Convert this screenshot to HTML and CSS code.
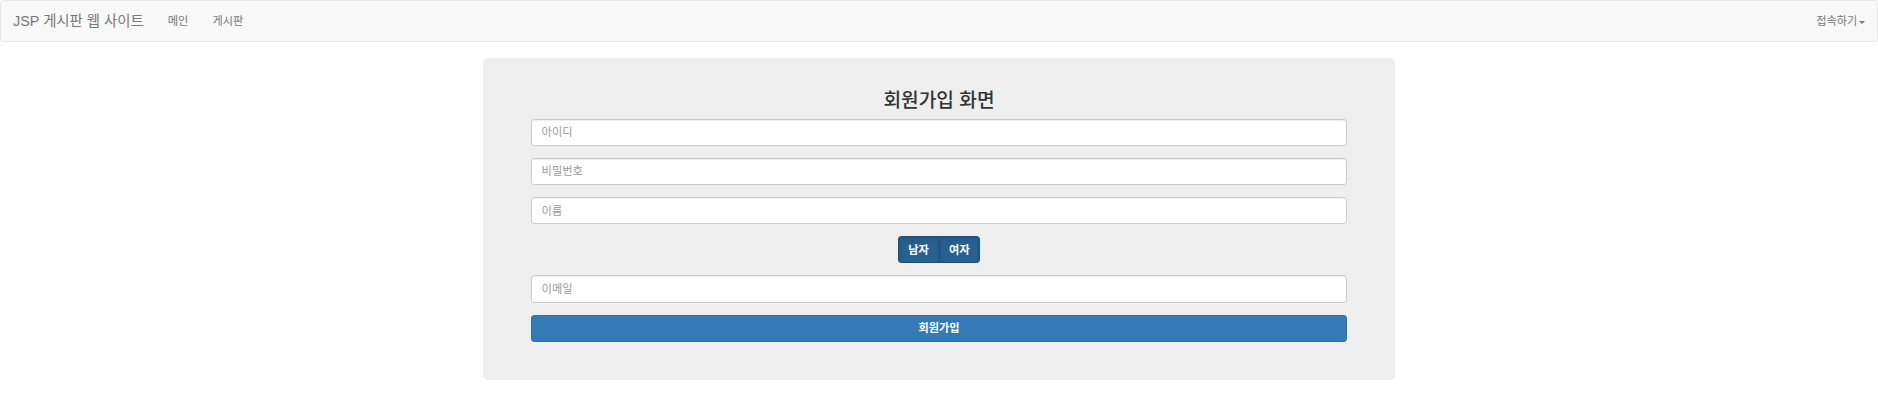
FILE: index.html
```html
<!DOCTYPE html>
<html lang="ko">
<head>
<meta charset="utf-8">
<title>JSP 게시판 웹 사이트</title>
<link rel="stylesheet" href="styles.css">
</head>
<body>
<nav class="navbar">
  <div class="nav-left">
    <a class="brand" href="#">JSP 게시판 웹 사이트</a>
    <ul class="nav">
      <li><a href="#">메인</a></li>
      <li><a href="#">게시판</a></li>
    </ul>
  </div>
  <ul class="nav">
    <li><a href="#">접속하기<span class="caret"></span></a></li>
  </ul>
</nav>
<div class="container">
  <div class="jumbotron">
    <form class="form">
      <h3 class="title">회원가입 화면</h3>
      <div class="form-group"><input class="form-control" type="text" placeholder="아이디"></div>
      <div class="form-group"><input class="form-control" type="password" placeholder="비밀번호"></div>
      <div class="form-group"><input class="form-control" type="text" placeholder="이름"></div>
      <div class="form-group center">
        <div class="btn-group">
          <label class="btn btn-active first">남자</label>
          <label class="btn btn-active last">여자</label>
        </div>
      </div>
      <div class="form-group"><input class="form-control" type="email" placeholder="이메일"></div>
      <button type="button" class="submit">회원가입</button>
    </form>
  </div>
</div>
</body>
</html>
```
FILE: styles.css
```css
* { box-sizing: border-box; }
html, body { margin: 0; padding: 0; }
body {
  font-family: "Liberation Sans", "Noto Sans CJK KR", sans-serif;
  font-size: 11.2px;
  line-height: 16px;
  color: #333;
  background: #fff;
}
a { text-decoration: none; }
.navbar {
  display: flex;
  justify-content: space-between;
  height: 41.6px;
  background: #f8f8f8;
  border: 1px solid #e7e7e7;
  border-radius: 3.2px;
  margin-bottom: 16px;
}
.nav-left { display: flex; }
.brand {
  display: block;
  padding: 12px 12px;
  font-size: 14.4px;
  line-height: 16px;
  color: #777;
  height: 39.6px;
}
.nav { display: flex; list-style: none; margin: 0; padding: 0; }
.nav a {
  display: block;
  padding: 12px 12px;
  line-height: 16px;
  color: #777;
}
.caret {
  display: inline-block;
  width: 0; height: 0;
  margin-left: 1.6px;
  vertical-align: middle;
  border-top: 3.2px solid #777;
  border-left: 3.2px solid transparent;
  border-right: 3.2px solid transparent;
}
.container { width: 912px; margin: 0 auto; }
.jumbotron {
  background: #eee;
  border-radius: 4.8px;
  padding: 16px 48px 38.4px;
}
.form { margin: 0; }
.title {
  margin: 16px 0 8px;
  font-size: 19.2px;
  line-height: 21.1px;
  font-weight: 500;
  text-align: center;
  color: #333;
}
.form-group { margin-bottom: 12px; }
.center { text-align: center; }
.form-control {
  display: block;
  width: 100%;
  height: 27.2px;
  padding: 4.8px 9.6px;
  font-family: inherit;
  font-size: 11.2px;
  line-height: 16px;
  color: #555;
  background: #fff;
  border: 1px solid #ccc;
  border-radius: 3.2px;
  box-shadow: inset 0 1px 1px rgba(0,0,0,.075);
  outline: none;
}
.form-control::placeholder { color: #999; }
.btn-group { display: inline-flex; vertical-align: middle; }
.btn {
  display: inline-block;
  height: 27.2px;
  padding: 4.8px 9.6px;
  font-size: 11.2px;
  line-height: 16px;
  font-weight: 700;
  color: #fff;
  border: 1px solid #204d74;
}
.btn-active {
  background: #286090;
  box-shadow: inset 0 2.4px 4px rgba(0,0,0,.125);
}
.first { border-radius: 3.2px 0 0 3.2px; }
.last { border-radius: 0 3.2px 3.2px 0; margin-left: -1px; }
.submit {
  display: block;
  width: 100%;
  height: 27.2px;
  padding: 4.8px 9.6px;
  font-family: inherit;
  font-size: 11.2px;
  line-height: 16px;
  font-weight: 700;
  color: #fff;
  background: #337ab7;
  border: 1px solid #2e6da4;
  border-radius: 3.2px;
}
```
